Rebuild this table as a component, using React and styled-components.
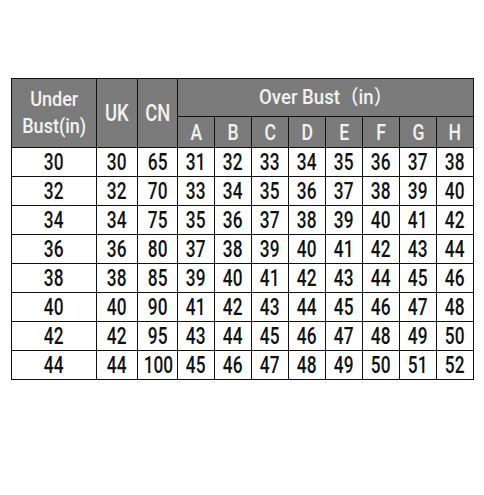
import styled, { createGlobalStyle } from 'styled-components';

const GlobalStyle = createGlobalStyle`
  html, body {
    margin: 0;
    padding: 0;
    background: #ffffff;
  }
`;

const cupLetters = ['A', 'B', 'C', 'D', 'E', 'F', 'G', 'H'];

const rows = [
  { under: 30, uk: 30, cn: 65 },
  { under: 32, uk: 32, cn: 70 },
  { under: 34, uk: 34, cn: 75 },
  { under: 36, uk: 36, cn: 80 },
  { under: 38, uk: 38, cn: 85 },
  { under: 40, uk: 40, cn: 90 },
  { under: 42, uk: 42, cn: 95 },
  { under: 44, uk: 44, cn: 100 },
];

const App = () => {
  return (
    <Page>
      <GlobalStyle />
      <SizeTable>
        <colgroup>
          <col style={{ width: 85 }} />
          <col style={{ width: 41 }} />
          <col style={{ width: 40 }} />
          {cupLetters.map(l => <col key={l} style={{ width: 37 }} />)}
        </colgroup>
        <thead>
          <TopRow>
            <HeadCell rowSpan={2} $size={21}><Narrow $scale={0.86}>Under<br />Bust(in)</Narrow></HeadCell>
            <HeadCell rowSpan={2} $size={23}><Narrow $scale={0.8}>UK</Narrow></HeadCell>
            <HeadCell rowSpan={2} $size={23}><Narrow $scale={0.8}>CN</Narrow></HeadCell>
            <HeadCell colSpan={8} $size={20}><Narrow $scale={0.93}>Over Bust（in）</Narrow></HeadCell>
          </TopRow>
          <SubRow>
            {cupLetters.map(l => (
              <HeadCell key={l} $size={22}><Narrow $scale={0.8}>{l}</Narrow></HeadCell>
            ))}
          </SubRow>
        </thead>
        <tbody>
          {rows.map(r => (
            <DataRow key={r.under}>
              <DataCell><Narrow>{r.under}</Narrow></DataCell>
              <DataCell><Narrow>{r.uk}</Narrow></DataCell>
              <DataCell><Narrow>{r.cn}</Narrow></DataCell>
              {cupLetters.map((l, j) => (
                <DataCell key={l}><Narrow>{r.under + 1 + j}</Narrow></DataCell>
              ))}
            </DataRow>
          ))}
        </tbody>
      </SizeTable>
    </Page>
  );
};

export default App;

const Page = styled.div`
  width: 484px;
  height: 495px;
  padding: 78px 0 0 11px;
  box-sizing: border-box;
  background: #ffffff;
`;

const SizeTable = styled.table`
  border-collapse: collapse;
  table-layout: fixed;
  width: 462px;
  font-family: Roboto, "DejaVu Sans Condensed", "Noto Sans CJK SC", sans-serif;
`;

const TopRow = styled.tr`
  height: 38px;
`;

const SubRow = styled.tr`
  height: 31px;
`;

const DataRow = styled.tr`
  height: 29px;
`;

const HeadCell = styled.th`
  background: #7b7b7b;
  color: #f2f2f2;
  font-weight: 500;
  font-size: ${p => p.$size}px;
  line-height: 27px;
  border: 1.5px solid #111111;
  padding: 0;
  text-align: center;
  vertical-align: middle;
`;

const DataCell = styled.td`
  color: #111111;
  font-size: 24px;
  font-weight: 500;
  line-height: 26px;
  border: 1.5px solid #111111;
  padding: 0;
  text-align: center;
  vertical-align: middle;
`;

const Narrow = styled.span`
  display: inline-block;
  transform: scaleX(${p => p.$scale ?? 0.72});
  white-space: nowrap;
`;
